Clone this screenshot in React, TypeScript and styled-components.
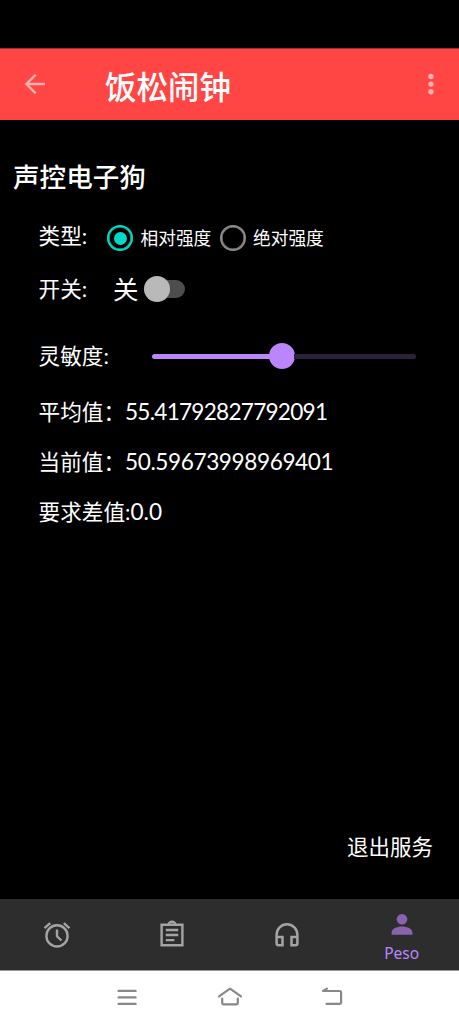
import React from "react";
import styled, { createGlobalStyle } from "styled-components";

const Global = createGlobalStyle`
  * { box-sizing: border-box; }
  body { margin: 0; background: #000; }
`;

const Screen = styled.div`
  width: 459px;
  height: 1024px;
  display: flex;
  flex-direction: column;
  background: #000;
  color: #fff;
  font-family: Lato, "Noto Sans CJK SC", sans-serif;
  overflow: hidden;
  white-space: nowrap;
`;

const StatusBar = styled.div`
  height: 48px;
  flex: none;
`;

const Toolbar = styled.header`
  height: 72px;
  flex: none;
  display: flex;
  align-items: center;
  background: #ff4645;
  border-top: 1px solid #a02c2b;
  padding: 0 13px 2px 20px;
`;

const Title = styled.h1`
  flex: 1;
  margin: 7px 0 0 55px;
  font-size: 31.5px;
  line-height: 44px;
  font-weight: 500;
`;

const Content = styled.main`
  flex: 1;
  display: flex;
  flex-direction: column;
`;

const Heading = styled.h2`
  margin: 37px 0 0 13px;
  font-size: 26.6px;
  line-height: 40px;
  font-weight: 500;
`;

const Row = styled.div<{ $h: number; $gap?: number }>`
  height: ${(p) => p.$h}px;
  margin-top: ${(p) => p.$gap ?? 0}px;
  display: flex;
  align-items: center;
  padding-left: 38px;
`;

const Label = styled.span<{ $w: number; $up?: number }>`
  width: ${(p) => p.$w}px;
  padding-left: 0.6px;
  font-size: 21.6px;
  line-height: 30px;
  margin-bottom: ${(p) => p.$up ?? 0}px;
`;

const RadioOption = styled.label<{ $w: number }>`
  width: ${(p) => p.$w}px;
  display: flex;
  align-items: center;
  gap: 7.5px;
  font-size: 17.7px;
  line-height: 26px;
`;

const RadioText = styled.span`
  padding-top: 2px;
`;

const RadioRing = styled.span<{ $on?: boolean }>`
  width: 26px;
  height: 26px;
  flex: none;
  border-radius: 50%;
  border: 2.5px solid ${(p) => (p.$on ? "#03dac5" : "#8c8c8c")};
  display: flex;
  align-items: center;
  justify-content: center;
  box-shadow: inset 0 0 0 0.5px ${(p) => (p.$on ? "#03dac5" : "#8c8c8c")};
`;

const RadioDot = styled.span`
  width: 13px;
  height: 13px;
  border-radius: 50%;
  background: #03dac5;
`;

const SwitchState = styled.span`
  width: 30px;
  font-size: 25.5px;
  line-height: 34px;
`;

const SwitchTrack = styled.span`
  width: 40.5px;
  height: 18px;
  margin-left: 1px;
  border-radius: 9px;
  background: #4d4d4d;
  display: flex;
  align-items: center;
`;

const SwitchThumb = styled.span`
  width: 26px;
  height: 26px;
  flex: none;
  border-radius: 50%;
  background: #b9b9b9;
`;

const Slider = styled.div`
  width: 264px;
  display: flex;
  align-items: center;
`;

const SliderBar = styled.span<{ $active?: boolean }>`
  height: 5px;
  flex: ${(p) => (p.$active ? "0 0 118px" : "1")};
  border-radius: ${(p) => (p.$active ? "3px 0 0 3px" : "0 3px 3px 0")};
  background: ${(p) => (p.$active ? "#bb86fc" : "#2c203b")};
`;

const SliderThumb = styled.span`
  width: 26px;
  height: 26px;
  margin: 0 -1px;
  flex: none;
  border-radius: 50%;
  background: #bb86fc;
`;

const Value = styled.span<{ $spacing?: number }>`
  font-size: 22.6px;
  line-height: 30px;
  letter-spacing: ${(p) => p.$spacing ?? 0}px;
`;

const ExitButton = styled.button`
  margin: auto 26px 37px auto;
  padding: 0;
  border: 0;
  background: none;
  color: #fff;
  font: inherit;
  font-size: 21.5px;
  line-height: 30px;
`;

const BottomNav = styled.nav`
  height: 71px;
  flex: none;
  display: grid;
  grid-template-columns: repeat(4, 1fr);
  background: #2d2d2d;
`;

const NavItem = styled.div<{ $active?: boolean }>`
  display: flex;
  flex-direction: column;
  align-items: center;
  justify-content: ${(p) => (p.$active ? "flex-start" : "center")};
  padding-top: ${(p) => (p.$active ? 10 : 0)}px;
  color: ${(p) => (p.$active ? "#8763b0" : "#a4a4a4")};
`;

const NavLabel = styled.span`
  font-family: "Noto Sans", sans-serif;
  font-size: 15.5px;
  line-height: 20px;
  margin-top: 4px;
  color: #bb86fc;
`;

const SystemBar = styled.footer`
  height: 54px;
  flex: none;
  display: flex;
  justify-content: center;
  align-items: center;
  gap: 72px;
  background: #fff;
  border-top: 1px solid #999;
  color: #888;
`;

const Icon = ({ size = 30, children }: { size?: number; children: React.ReactNode }) => (
  <svg width={size} height={size} viewBox={`0 0 ${size} ${size}`} fill="none" stroke="currentColor" strokeWidth={2.4}>
    {children}
  </svg>
);

export default function App() {
  return (
    <Screen>
      <Global />
      <StatusBar />
      <Toolbar>
        <svg width="30" height="30" viewBox="0 0 30 30" fill="none" stroke="#ffb1b0" strokeWidth="2.4">
          <path d="M25 15H7M15.7 5.7 6.4 15l9.3 9.3" />
        </svg>
        <Title>饭松闹钟</Title>
        <svg width="30" height="30" viewBox="0 0 30 30" fill="#ffb1b0">
          <circle cx="15" cy="7.5" r="2.7" />
          <circle cx="15" cy="15.1" r="2.7" />
          <circle cx="15" cy="22.7" r="2.7" />
        </svg>
      </Toolbar>
      <Content>
        <Heading>声控电子狗</Heading>
        <Row $h={50} $gap={16}>
          <Label $w={69} $up={4}>类型:</Label>
          <RadioOption $w={112.5}>
            <RadioRing $on><RadioDot /></RadioRing><RadioText>相对强度</RadioText>
          </RadioOption>
          <RadioOption $w={110}>
            <RadioRing /><RadioText>绝对强度</RadioText>
          </RadioOption>
        </Row>
        <Row $h={52}>
          <Label $w={75}>开关:</Label>
          <SwitchState>关</SwitchState>
          <SwitchTrack><SwitchThumb /></SwitchTrack>
        </Row>
        <Row $h={62} $gap={10}>
          <Label $w={114}>灵敏度:</Label>
          <Slider>
            <SliderBar $active />
            <SliderThumb />
            <SliderBar />
          </Slider>
        </Row>
        <Row $h={50}>
          <Label $w={87}>平均值：</Label>
          <Value $spacing={-0.75}>55.41792827792091</Value>
        </Row>
        <Row $h={50}>
          <Label $w={87}>当前值：</Label>
          <Value $spacing={-0.4}>50.59673998969401</Value>
        </Row>
        <Row $h={50}>
          <Label $w={92.5}>要求差值:</Label>
          <Value>0.0</Value>
        </Row>
        <ExitButton>退出服务</ExitButton>
      </Content>
      <BottomNav>
        <NavItem>
          <Icon>
            <circle cx="15" cy="15.9" r="10.6" />
            <path d="M15 9.6v6.7l4.4 4.2M2.5 8.2l5.7-5M27.5 8.2l-5.7-5" />
          </Icon>
        </NavItem>
        <NavItem>
          <Icon>
            <path d="M4.6 4.7h20.8v20.6H4.6zM8.8 10h12.4M8.8 15h12.4M8.8 20.1h8.6" />
            <path d="M11.5 4.7a3.5 3 0 0 1 7 0" />
          </Icon>
        </NavItem>
        <NavItem>
          <Icon>
            <path d="M4.6 23.2V14.7a10.4 10.4 0 0 1 20.8 0V23.2a2 2 0 0 1-2 2H19.5v-8.3h5.9M4.6 16.9h5.9V25.2H6.6a2 2 0 0 1-2-2" strokeWidth="2.5" />
          </Icon>
        </NavItem>
        <NavItem $active>
          <svg width="30" height="30" viewBox="0 0 30 30" fill="currentColor">
            <circle cx="15" cy="10.2" r="5.3" />
            <path d="M4.6 25.8v-2.3c0-3.7 5-6 10.4-6s10.4 2.3 10.4 6v2.3z" />
          </svg>
          <NavLabel>Peso</NavLabel>
        </NavItem>
      </BottomNav>
      <SystemBar>
        <Icon>
          <path d="M5.7 7.9h16.8M5.7 14.4h16.8M5.7 20.9h16.8" strokeLinecap="round" />
        </Icon>
        <Icon>
          <path d="M4 13.4 15 5.7l11 7.7M7.2 15.5v4.5a1.3 1.3 0 0 0 1.3 1.3h13a1.3 1.3 0 0 0 1.3-1.3v-4.5" strokeLinecap="round" strokeLinejoin="round" strokeWidth="2.2" />
        </Icon>
        <Icon>
          <path d="M10 5.6 6 8h16.8a1.3 1.3 0 0 1 1.3 1.3v10.2a1.3 1.3 0 0 1-1.3 1.3H9.5" strokeLinecap="round" strokeLinejoin="round" strokeWidth="2.2" />
        </Icon>
      </SystemBar>
    </Screen>
  );
}
